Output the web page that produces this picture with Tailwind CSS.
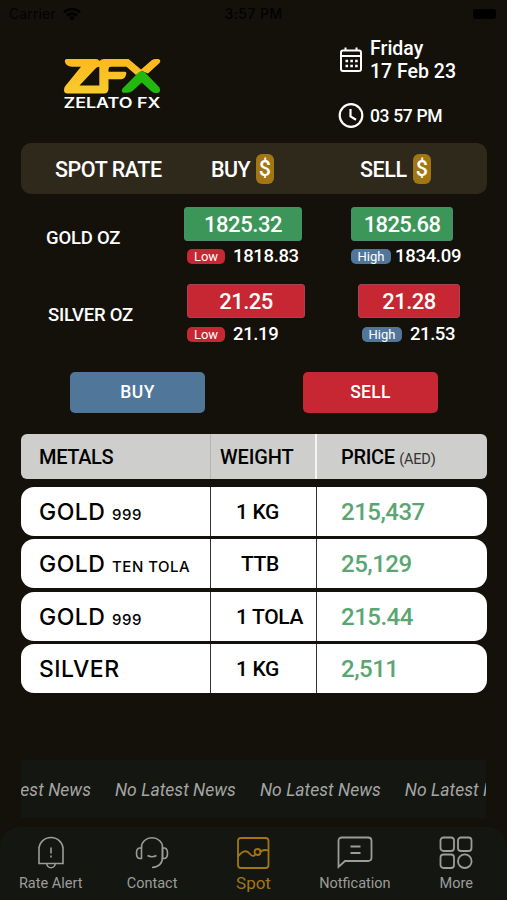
<!DOCTYPE html>
<html lang="en">
<head>
  <meta charset="UTF-8" />
  <meta name="viewport" content="width=device-width, initial-scale=1.0"/>
  <title>Zelato FX</title>
  <script src="https://cdn.jsdelivr.net/npm/@tailwindcss/browser@4"></script>
</head>
<body class="bg-[#14110b] text-white font-['Roboto',sans-serif] overflow-hidden">
  <div class="w-[507px] h-[900px] flex flex-col overflow-hidden">

    <!-- Status bar -->
    <div class="h-7 shrink-0 grid grid-cols-3 items-center pl-[9px] pr-[11px] text-[14px] leading-none text-[#020201] font-['Inter',sans-serif]">
      <div class="flex items-center gap-[7px]">
        <span class="tracking-[0.1px]">Carrier</span>
        <svg width="18" height="14" viewBox="0 0 18 14" fill="none" stroke="currentColor" stroke-width="2.6"><path d="M1 5.2a11.5 11.5 0 0 1 16 0M4 8.6a7.2 7.2 0 0 1 10 0"/><path d="M9 13.5 6 10.6a4.3 4.3 0 0 1 6 0z" fill="currentColor" stroke="none"/></svg>
      </div>
      <span class="text-center tracking-[0.4px] pl-[2px] font-medium">3:57 PM</span>
      <div class="justify-self-end w-[23px] h-[10px] rounded-[3px] bg-black"></div>
    </div>

    <!-- Logo and date -->
    <header class="h-[115px] shrink-0 flex">
      <div class="w-[338px] pl-[62px] pt-[29px]">
        <svg width="100" height="54" viewBox="0 0 100 54">
          <defs>
            <linearGradient id="gold" x1="0" y1="0" x2="0" y2="1">
              <stop offset="0" stop-color="#fdb81e"/>
              <stop offset="1" stop-color="#f7cc2e"/>
            </linearGradient>
          </defs>
          <path fill="url(#gold)" fill-rule="evenodd" d="M4.500 2H34Q36.500 2 37.500 4Q39 2 42 2H66.500L79 12.500L90 3Q91.500 2 94 2H96.500Q99.500 3 97.500 6L86 16.500L80 14L74 18L64.500 9.700H49Q46.500 9.700 46.500 12V14.700H63Q65 15 64 18Q62.500 22.300 59 22.300H46.500V32Q46 36.500 42 36.500H5Q1 36 2.300 31Q2.500 29.500 4.500 27.500L19 9.700H10Q4 9.500 2.800 4.500Q2.500 2.300 4.500 2ZM33 12L17.500 28.500H37.300V9.700Q35 9.700 33 12Z"/>
          <path fill="#22b80e" d="M76.500 15.500Q79.800 13 83 15.500L97.500 30.500Q99.500 36 94.500 36Q91.500 36.500 89 34L79.700 25.500L70.500 34Q68 36 64.500 35.800H61.500Q58.500 35 60.500 31.500Z"/>
          <!-- wordmark -->
          <text x="1.500" y="50.500" textLength="97" lengthAdjust="spacingAndGlyphs" fill="#fff" font-family="Inter" font-weight="600" font-size="14.500">ZELATO FX</text>
        </svg>
      </div>
      <div class="pt-[9px]">
        <div class="flex items-center">
          <svg width="26" height="28" viewBox="0 0 26 28" fill="none" stroke="#fff" stroke-width="2"><rect x="3" y="4.500" width="20" height="20.500" rx="2"/><path d="M3 10h20M7.500 1.500v3M18.500 1.500v3"/><path stroke-width="2.600" stroke-dasharray="2.600 2.200" d="M7.500 15h13M7.500 20h13"/></svg>
          <div class="ml-[6px] text-[19.500px] leading-[23px] font-medium"><div>Friday</div><div>17 Feb 23</div></div>
        </div>
        <div class="flex items-center mt-[20px]">
          <svg width="26" height="26" viewBox="0 0 26 26" fill="none" stroke="#fff" stroke-width="2.200"><circle cx="13" cy="12.500" r="11.300"/><path d="M12.500 6v7.500l5.500 3.300"/></svg>
          <div class="ml-[6px] text-[17.500px] leading-6 font-medium tracking-[-0.350px]">03 57 PM</div>
        </div>
      </div>
    </header>

    <!-- Spot rates -->
    <section class="mx-[21px] w-[466px]">
      <div class="h-[51px] rounded-[10px] bg-[#2f291b] flex items-center text-[21.500px] font-medium leading-none">
        <div class="w-[190px] pl-[34px] pt-[2px] tracking-[-0.450px]">SPOT RATE</div>
        <div class="w-[149px] flex items-center gap-[6px]"><span class="pt-[2px] tracking-[-0.600px]">BUY</span><span class="w-[18px] h-[30px] rounded-[6px] bg-[#a27612] flex items-center justify-center">$</span></div>
        <div class="flex items-center gap-[6px]"><span class="pt-[2px] tracking-[-0.400px]">SELL</span><span class="w-[18px] h-[30px] rounded-[6px] bg-[#a27612] flex items-center justify-center">$</span></div>
      </div>

      <div class="flex pt-[13px] h-[77px]">
        <div class="w-[163px] pl-[25px] pt-[20px] text-[18.500px] leading-[22px] font-medium tracking-[-0.200px]">GOLD OZ</div>
        <div class="w-[167px]">
          <div class="w-[118px] h-[34px] rounded-[3px] bg-[#3c9659] border border-[#4b8d70] flex items-center justify-center text-[22px] font-medium tracking-[-0.450px]">1825.32</div>
          <div class="mt-[5px] pl-[3px] flex items-center h-[20px]"><span class="w-[38px] h-[15px] rounded-[5px] bg-[#c72732] text-[13px] leading-[15px] text-center">Low</span><span class="ml-[8px] pt-[2px] text-[18.500px] font-medium tracking-[-0.350px]">1818.83</span></div>
        </div>
        <div>
          <div class="w-[102px] h-[34px] rounded-[3px] bg-[#3c9659] border border-[#4b8d70] flex items-center justify-center text-[22px] font-medium tracking-[-0.650px]">1825.68</div>
          <div class="mt-[5px] flex items-center h-[20px]"><span class="w-[40px] h-[15px] rounded-[5px] bg-[#50779a] text-[13px] leading-[15px] text-center">High</span><span class="ml-[4px] pt-[2px] text-[18.500px] font-medium tracking-[-0.300px]">1834.09</span></div>
        </div>
      </div>

      <div class="flex pt-[13px] h-[101px]">
        <div class="w-[166px] pl-[27px] pt-[20px] text-[18.500px] leading-[22px] font-medium tracking-[-0.250px]">SILVER OZ</div>
        <div class="w-[171px]">
          <div class="w-[118px] h-[34px] rounded-[3px] bg-[#c72732] border border-[#a84258] flex items-center justify-center text-[22px] font-medium tracking-[-0.500px]">21.25</div>
          <div class="mt-[6px] flex items-center h-[20px]"><span class="w-[38px] h-[15px] rounded-[5px] bg-[#c72732] text-[13px] leading-[15px] text-center">Low</span><span class="ml-[8px] pt-[2px] text-[18.500px] font-medium tracking-[-0.350px]">21.19</span></div>
        </div>
        <div>
          <div class="w-[102px] h-[34px] rounded-[3px] bg-[#c72732] border border-[#a84258] flex items-center justify-center text-[22px] font-medium tracking-[-0.500px]">21.28</div>
          <div class="mt-[6px] pl-[4px] flex items-center h-[20px]"><span class="w-[40px] h-[15px] rounded-[5px] bg-[#50779a] text-[13px] leading-[15px] text-center">High</span><span class="ml-[8px] pt-[2px] text-[18.500px] font-medium tracking-[-0.450px]">21.53</span></div>
        </div>
      </div>

      <div class="flex justify-between pl-[49px] pr-[49px] h-[62px]">
        <button class="w-[135px] h-[41px] rounded-[5px] bg-[#50779a] text-[17.500px] font-medium tracking-[0.500px]">BUY</button>
        <button class="w-[135px] h-[41px] rounded-[5px] bg-[#c72732] text-[17.500px] font-medium tracking-[0.300px]">SELL</button>
      </div>
    </section>

    <!-- Metals table -->
    <section class="mx-[21px] w-[466px] text-black">
      <div class="h-[45px] mb-[8px] rounded-[6px] bg-[#cececc] flex overflow-hidden text-[20px] leading-[46px] font-medium tracking-[-0.350px]">
        <div class="w-[190px] pl-[18px] border-r border-[#b5b5b3]">METALS</div>
        <div class="w-[106px] pl-[9px] border-r-2 border-[#f4f4f2] tracking-[-0.100px]">WEIGHT</div>
        <div class="pl-[24px]">PRICE <span class="text-[14.500px] font-normal text-[#333] tracking-[-0.200px]">(AED)</span></div>
      </div>
      <div id="rows" class="flex flex-col gap-[3.300px]"></div>
    </section>

    <!-- News ticker -->
    <div class="mx-[21px] mt-[67px] h-[58px] shrink-0 bg-[#141612] overflow-hidden flex items-center text-[17.500px] tracking-[0.050px] italic text-[#a5a5a2] whitespace-nowrap">
      <div class="-ml-[51px] pt-[2px] flex gap-[24px]">
        <span>No Latest News</span><span>No Latest News</span><span>No Latest News</span><span>No Latest News</span>
      </div>
    </div>

    <!-- Bottom navigation -->
    <nav class="mt-[9px] h-[76px] shrink-0 rounded-t-[20px] bg-[#141612] grid grid-cols-5 text-[#9c9d9a] text-[14.500px] leading-[18px] text-center">
      <div class="flex flex-col items-center pt-[8px]">
        <svg width="36" height="36" viewBox="0 0 36 36" fill="none" stroke="currentColor" stroke-width="1.600"><path d="M6 28.500V14a12 11.500 0 0 1 24 0v14.500zM13.800 28.500a4.200 4.200 0 0 0 8.400 0"/><path d="M18 12.500v6M18 20.500v2"/></svg>
        <span class="mt-[4px]">Rate Alert</span>
      </div>
      <div class="flex flex-col items-center pt-[8px]">
        <svg width="36" height="36" viewBox="0 0 36 36" fill="none" stroke="currentColor" stroke-width="1.600"><path d="M7.500 13v-1a10.500 9.200 0 0 1 21 0v10q0 9.500-10.500 10.500"/><path d="M7.500 13v10.500H5.500q-3-.5-3-5.300t3-5.200zM28.500 13v10.500h2q3-.5 3-5.300t-3-5.200z"/><path d="M13.500 20.500q4.500 2.500 9 0"/></svg>
        <span class="mt-[4px]">Contact</span>
      </div>
      <div class="flex flex-col items-center pt-[8px] text-[#a27612]">
        <svg width="36" height="36" viewBox="0 0 36 36" fill="none" stroke="currentColor" stroke-width="1.800"><rect x="3" y="3" width="30.500" height="30" rx="3"/><path d="M3 21.500q7-9 12-2.500 3.500 4 6-.5M25 17q3-3 8.500-1.500"/><circle cx="22.500" cy="17" r="3"/></svg>
        <span class="mt-[3px] text-[17px]">Spot</span>
      </div>
      <div class="flex flex-col items-center pt-[8px]">
        <svg width="36" height="36" viewBox="0 0 36 36" fill="none" stroke="currentColor" stroke-width="1.800"><path d="M1.500 32V6q0-3.500 3.500-3.500h26q3.500 0 3.500 3.500v16.500q0 3.500-3.500 3.500H8z"/><path stroke-width="2" d="M13.500 11.500h10M13.500 18h10"/></svg>
        <span class="mt-[4px]">Notfication</span>
      </div>
      <div class="flex flex-col items-center pt-[8px]">
        <svg width="36" height="36" viewBox="0 0 36 36" fill="none" stroke="currentColor" stroke-width="1.800"><rect x="2.500" y="2.500" width="13.500" height="13.500" rx="3"/><rect x="20" y="2.500" width="13.500" height="13.500" rx="3"/><rect x="2.500" y="19.500" width="13.500" height="13.500" rx="3"/><circle cx="26.800" cy="26.200" r="6.800"/></svg>
        <span class="mt-[4px]">More</span>
      </div>
    </nav>
  </div>

  <script>
    const metals = [
      { name: "GOLD", note: "999", weight: "1 KG", price: "215,437" },
      { name: "GOLD", note: "TEN TOLA", weight: "TTB", price: "25,129" },
      { name: "GOLD", note: "999", weight: "1 TOLA", price: "215.44" },
      { name: "SILVER", note: "", weight: "1 KG", price: "2,511" }
    ];

    document.getElementById("rows").innerHTML = metals.map(m => `
      <div class="h-[49px] rounded-[13px] bg-white flex overflow-hidden leading-[50px] whitespace-nowrap">
        <div class="w-[190px] pl-[18px] border-r border-[#333] font-['Inter',sans-serif] font-medium text-[23px] tracking-[0.500px]">${m.name} <span class="text-[15px]">${m.note}</span></div>
        <div class="w-[106px] ${m.weight === "TTB" ? "pl-[30px]" : "pl-[25px]"} border-r border-[#333] text-[21px] font-medium tracking-[-0.350px]">${m.weight}</div>
        <div class="pl-[24px] text-[24px] font-medium tracking-[-0.500px] text-[#5aa672]">${m.price}</div>
      </div>`).join("");
  </script>
</body>
</html>
